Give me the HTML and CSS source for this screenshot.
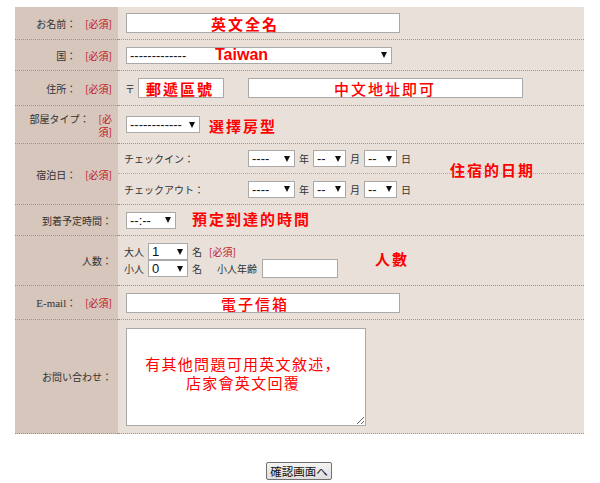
FILE: index.html
```html
<!DOCTYPE html>
<html lang="ja">
<head>
<meta charset="utf-8">
<title>予約フォーム</title>
<link rel="stylesheet" href="styles.css">
</head>
<body>
<div class="form">
  <div class="lab"><span class="lt">お名前：<span class="req">[必須]</span></span></div>
  <div class="fld">
    <div class="box"><input class="inp w274" type="text"><span class="note n-name">英文全名</span></div>
  </div>

  <div class="lab"><span class="lt">国：<span class="req">[必須]</span></span></div>
  <div class="fld">
    <div class="box"><div class="sel w266"><span class="val">-------------</span><span class="arr"></span></div><span class="note n-tw">Taiwan</span></div>
  </div>

  <div class="lab"><span class="lt">住所：<span class="req">[必須]</span></span></div>
  <div class="fld">
    <span class="zip">〒</span>
    <div class="box"><input class="inp w86" type="text"><span class="note n-zip">郵遞區號</span></div>
    <div class="box gap24"><input class="inp w275" type="text"><span class="note thin n-addr">中文地址即可</span></div>
  </div>

  <div class="lab"><span class="lt">部屋タイプ：<span class="req">[必須]</span></span></div>
  <div class="fld">
    <div class="sel w74"><span class="val">------------</span><span class="arr"></span></div>
    <span class="note inflow room">選擇房型</span>
  </div>

  <div class="lab span2"><span class="lt">宿泊日：<span class="req">[必須]</span></span></div>
  <div class="fld sub">
    <span class="dl">チェックイン：</span>
    <div class="sel w47"><span class="val">----</span><span class="arr"></span></div><span class="u">年</span>
    <div class="sel w33"><span class="val">--</span><span class="arr"></span></div><span class="u">月</span>
    <div class="sel w33"><span class="val">--</span><span class="arr"></span></div><span class="u">日</span>
    <span class="note n-date">住宿的日期</span>
  </div>
  <div class="fld">
    <span class="dl">チェックアウト：</span>
    <div class="sel w47"><span class="val">----</span><span class="arr"></span></div><span class="u">年</span>
    <div class="sel w33"><span class="val">--</span><span class="arr"></span></div><span class="u">月</span>
    <div class="sel w33"><span class="val">--</span><span class="arr"></span></div><span class="u">日</span>
  </div>

  <div class="lab"><span class="lt">到着予定時間：</span></div>
  <div class="fld">
    <div class="sel w50"><span class="val">--:--</span><span class="arr"></span></div>
    <span class="note inflow arrive">預定到達的時間</span>
  </div>

  <div class="lab"><span class="lt">人数：</span></div>
  <div class="fld">
    <div class="people">
      <div class="pl one">
        <span class="pt">大人</span>
        <div class="sel w40"><span class="val">1</span><span class="arr"></span></div>
        <span class="u">名</span><span class="req small">[必須]</span>
      </div>
      <div class="pl two">
        <span class="pt">小人</span>
        <div class="sel w40"><span class="val">0</span><span class="arr"></span></div>
        <span class="u">名</span>
        <span class="age">小人年齢</span>
        <input class="inp w76 h19" type="text">
      </div>
    </div>
    <span class="note inflow ppl">人數</span>
  </div>

  <div class="lab"><span class="lt"><span class="en">E-mail</span>：<span class="req">[必須]</span></span></div>
  <div class="fld">
    <div class="box"><input class="inp w274" type="text"><span class="note thin n-mail">電子信箱</span></div>
  </div>

  <div class="lab"><span class="lt">お問い合わせ：</span></div>
  <div class="fld">
    <textarea class="msg">有其他問題可用英文敘述，
店家會英文回覆</textarea>
  </div>
</div>
<div class="actions"><button class="btn" type="button">確認画面へ</button></div>
</body>
</html>
```

FILE: styles.css
```css
html, body {
  margin: 0;
  padding: 0;
  background: #fff;
}
body {
  font-family: "Noto Sans CJK JP", "Liberation Sans", sans-serif;
  font-size: 10px;
  color: #333;
}
.form {
  display: grid;
  grid-template-columns: 103px 466px;
  grid-template-rows: 33px 31px 35px 38px 30px 31px 31px 50px 34px 114px;
  width: 569px;
  margin: 7px 0 0 15px;
}
.lab {
  background: #d7c6bb;
  border-bottom: 1px dotted #9d9590;
  display: flex;
  align-items: center;
  justify-content: flex-end;
  text-align: right;
  padding: 0 6px 0 12px;
  line-height: 13px;
  box-sizing: border-box;
}
.lab.span2 { grid-row: span 2; }
.lt { display: block; }
.req {
  color: #c0142a;
  margin-left: 9px;
}
.req.small { margin-left: 3px; }
.en {
  font-family: "Liberation Serif", serif;
  font-size: 11px;
}
.fld {
  background: #e9e0da;
  border-bottom: 1px dotted #9d9590;
  display: flex;
  align-items: center;
  padding-left: 8px;
  position: relative;
  box-sizing: border-box;
}
.fld.sub { border-bottom-color: #b5aca6; z-index: 2; }
.box { position: relative; display: flex; }
.gap24 { margin-left: 24px; }
.inp {
  box-sizing: border-box;
  height: 20px;
  border: 1px solid #a9a9a9;
  background: #fff;
  margin: 0;
  padding: 0 3px;
  outline: none;
}
.w274 { width: 274px; }
.w275 { width: 275px; }
.w86 { width: 86px; }
.w76 { width: 76px; }
.h19 { height: 19px; }
.sel {
  box-sizing: border-box;
  height: 17px;
  border: 1px solid #a9a9a9;
  background: #fff;
  display: flex;
  align-items: center;
  justify-content: space-between;
  padding: 0 4px 0 3px;
  font-family: "Liberation Sans", sans-serif;
  font-size: 13px;
  color: #111;
  line-height: 1;
}
.w266 { width: 266px; }
.w74 { width: 74px; }
.w47 { width: 47px; }
.w33 { width: 33px; }
.w50 { width: 50px; }
.w40 { width: 40px; }
.arr {
  width: 0;
  height: 0;
  border-left: 3px solid transparent;
  border-right: 3px solid transparent;
  border-top: 6px solid #111;
}
.u { margin: 0 4px; }
.zip { margin-left: -1px; margin-right: 3px; }
.dl { width: 124px; margin-left: -2px; }
.note {
  font-family: "Noto Sans CJK TC", "Noto Sans CJK SC", sans-serif;
  font-size: 15px;
  font-weight: 700;
  letter-spacing: 2px;
  color: #ff0000;
  line-height: 1;
  white-space: nowrap;
}
.note.thin { font-weight: 500; }
.box .note {
  position: absolute;
  top: 50%;
  transform: translateY(-50%);
}
.n-name { left: 85px; }
.n-tw {
  left: 89px;
  font-family: "Liberation Sans", sans-serif;
  font-size: 16px;
  letter-spacing: 0;
}
.n-zip { left: 8px; }
.n-addr { left: 86px; }
.n-mail { left: 95px; }
.room { margin-left: 9px; margin-top: 2px; }
.arrive { margin-left: 16px; margin-top: -3px; }
.n-date {
  position: absolute;
  left: 332px;
  top: 18px;
  z-index: 3;
}
.people {
  display: flex;
  flex-direction: column;
  margin-left: -2px;
}
.pl { display: flex; }
.pl.one { height: 16px; align-items: flex-start; }
.pl.two { height: 19px; align-items: flex-end; }
.pl.two .sel { margin-bottom: 1px; }
.pl.two .pt, .pl.two .u, .pl.two .age { align-self: center; }
.pl.one .pt, .pl.one .u, .pl.one .req { align-self: center; }
.pt { margin-right: 4px; }
.age { margin-left: 11px; margin-right: 5px; }
.ppl { margin-left: 37px; margin-bottom: 5px; }
.msg {
  box-sizing: border-box;
  width: 240px;
  height: 98px;
  border: 1px solid #a9a9a9;
  background: #fff;
  margin: 0;
  padding: 25px 8px 0 2px;
  resize: both;
  text-align: center;
  font-family: "Noto Sans CJK TC", "Noto Sans CJK SC", sans-serif;
  font-size: 15px;
  line-height: 19px;
  letter-spacing: 1.3px;
  color: #ff0000;
  overflow: hidden;
  outline: none;
}
.actions {
  display: flex;
  justify-content: center;
  padding: 28px 0 0 0;
}
.btn {
  box-sizing: border-box;
  width: 66px;
  height: 18px;
  margin-left: -2px;
  padding: 0;
  border: 1px solid #707070;
  border-radius: 2px;
  background: linear-gradient(#f4f4f4, #dedede);
  font-family: "Noto Sans CJK JP", sans-serif;
  font-size: 11.5px;
  line-height: 16px;
  color: #111;
}
```
